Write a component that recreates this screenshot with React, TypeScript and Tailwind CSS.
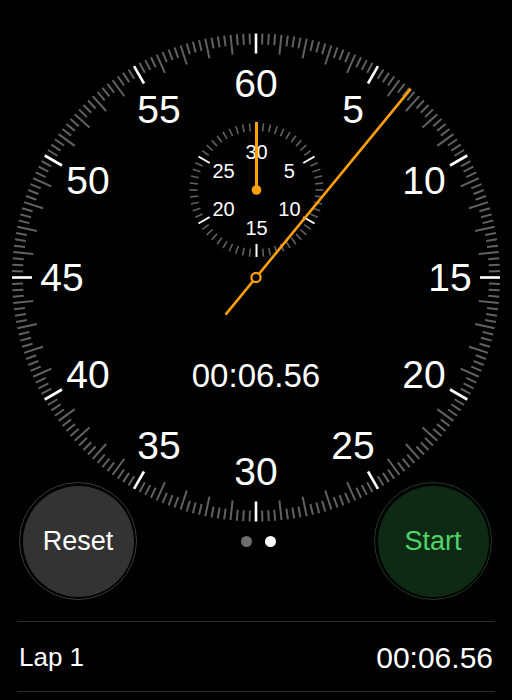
import React from "react";

const CX = 256;
const CY = 277.5;
const R = 244;
const SCX = 256.5;
const SCY = 190;
const SR = 67;
const ORANGE = "#FF9F0A";

function pt(cx: number, cy: number, r: number, deg: number) {
  const a = (deg * Math.PI) / 180;
  return [cx + r * Math.sin(a), cy - r * Math.cos(a)];
}

function Dial() {
  const ticks: React.ReactNode[] = [];
  for (let i = 0; i < 240; i++) {
    const deg = i * 1.5;
    const major = i % 20 === 0;
    const long = i % 4 === 0;
    const len = major || long ? 20 : 11;
    const [x1, y1] = pt(CX, CY, R, deg);
    const [x2, y2] = pt(CX, CY, R - len, deg);
    ticks.push(
      <line
        key={"t" + i}
        x1={x1}
        y1={y1}
        x2={x2}
        y2={y2}
        stroke={major ? "#ffffff" : "#616161"}
        strokeWidth={major ? 2.6 : 2}
      />
    );
  }
  const labels = [60, 5, 10, 15, 20, 25, 30, 35, 40, 45, 50, 55];
  const nums = labels.map((n, k) => {
    const [x, y] = pt(CX, CY, 194, k * 30);
    return (
      <text
        key={"n" + n}
        x={x}
        y={y + 39 * 0.358}
        textAnchor="middle"
        fontSize={39}
        fill="#ffffff"
        fontFamily="'Liberation Sans', Arial, sans-serif"
      >
        {n}
      </text>
    );
  });

  const sticks: React.ReactNode[] = [];
  for (let i = 0; i < 60; i++) {
    const deg = i * 6;
    const major = i % 10 === 0;
    const len = major ? 13 : 8;
    const [x1, y1] = pt(SCX, SCY, SR, deg);
    const [x2, y2] = pt(SCX, SCY, SR - len, deg);
    sticks.push(
      <line
        key={"s" + i}
        x1={x1}
        y1={y1}
        x2={x2}
        y2={y2}
        stroke={major ? "#ffffff" : "#616161"}
        strokeWidth={major ? 2 : 1.6}
      />
    );
  }
  const slabels = [30, 5, 10, 15, 20, 25];
  const snums = slabels.map((n, k) => {
    const [x, y] = pt(SCX, SCY, 38, k * 60);
    return (
      <text
        key={"sn" + n}
        x={x}
        y={y + 20 * 0.358}
        textAnchor="middle"
        fontSize={20}
        fill="#ffffff"
        fontFamily="'Liberation Sans', Arial, sans-serif"
      >
        {n}
      </text>
    );
  });

  const handDeg = 6.56 * 6;
  const [tx, ty] = pt(CX, CY, R, handDeg);
  const [bx, by] = pt(CX, CY, -48, handDeg);

  return (
    <svg width={512} height={525} viewBox="0 0 512 525" className="block">
      {ticks}
      {nums}
      {sticks}
      {snums}
      <line x1={SCX} y1={SCY} x2={SCX} y2={SCY - 68} stroke={ORANGE} strokeWidth={3} />
      <circle cx={SCX} cy={SCY} r={4.8} fill={ORANGE} />
      <text
        x={CX}
        y={375 + 33 * 0.358}
        textAnchor="middle"
        fontSize={33}
        fill="#ffffff"
        fontFamily="'Liberation Sans', Arial, sans-serif"
      >
        00:06.56
      </text>
      <line x1={bx} y1={by} x2={tx} y2={ty} stroke={ORANGE} strokeWidth={2.6} />
      <circle cx={CX} cy={CY} r={4.6} fill="#000000" stroke={ORANGE} strokeWidth={2.2} />
    </svg>
  );
}

export default function App() {
  return (
    <div
      className="w-[512px] h-[700px] bg-black text-white overflow-hidden"
      style={{ fontFamily: "'Liberation Sans', Arial, sans-serif" }}
    >
      <Dial />
      <div className="-mt-[43px] flex items-center justify-between pl-[19px] pr-[20px]">
        <div className="w-[118px] h-[118px] rounded-full border-[1.5px] border-[#3c3c3c] p-[2.5px]">
          <div className="w-full h-full rounded-full bg-[#333333] flex items-center justify-center text-[27px] text-white">
            Reset
          </div>
        </div>
        <div className="flex items-center gap-[13px] ml-[6px]">
          <div className="w-[11px] h-[11px] rounded-full bg-[#6e6e6e]" />
          <div className="w-[11px] h-[11px] rounded-full bg-white" />
        </div>
        <div className="w-[118px] h-[118px] rounded-full border-[1.5px] border-[#1d3d22] p-[2.5px]">
          <div className="w-full h-full rounded-full bg-[#0f2a14] flex items-center justify-center text-[27px] text-[#4fd467]">
            Start
          </div>
        </div>
      </div>
      <div className="mt-[21px] mx-[17px] border-t border-b border-[#2e2e2e] h-[71px] flex items-center justify-between pl-[2px] pr-[2px]">
        <span className="text-[26px] pt-[2px]">Lap 1</span>
        <span className="text-[30px] pt-[2px]">00:06.56</span>
      </div>
    </div>
  );
}
